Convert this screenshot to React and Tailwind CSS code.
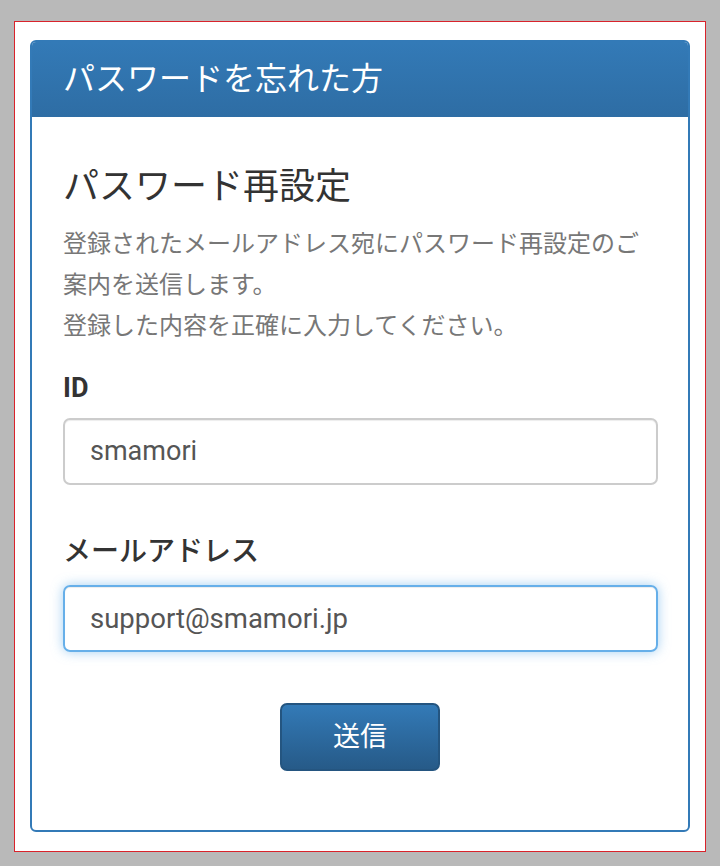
export default function App() {
  const font = { fontFamily: "Roboto, 'Noto Sans CJK JP', sans-serif" };
  return (
    <div className="w-[720px] h-[866px] bg-[#b9b9b9] pt-[21px] pl-[14px]" style={font}>
      <div className="w-[692px] h-[831px] border border-[#d9232b] bg-white pt-[18px] pl-[15px]">
        <div className="w-[660px] h-[792px] border-2 border-[#337ab7] rounded-[6px] overflow-hidden flex flex-col">
          <div className="h-[75px] bg-gradient-to-b from-[#337ab7] to-[#2e6da4] pl-[31px] flex items-center">
            <h2 className="text-white text-[32px] leading-none pb-[2px]">パスワードを忘れた方</h2>
          </div>
          <div className="px-[31px] pt-[48px]">
            <h3 className="text-[36px] leading-[44px] text-[#333]">パスワード再設定</h3>
            <p className="mt-[15px] text-[24px] leading-[41px] text-[#777]">
              登録されたメールアドレス宛にパスワード再設定のご案内を送信します。
              <br />
              登録した内容を正確に入力してください。
            </p>
            <label className="block mt-[21px] text-[27px] leading-[40px] font-bold text-[#333]">ID</label>
            <div className="mt-[10px] h-[67px] w-[595px] border-2 border-[#ccc] rounded-[7px] flex items-center pl-[25px] text-[27px] text-[#555] shadow-[inset_0_1px_1px_rgba(0,0,0,0.075)]">
              smamori
            </div>
            <label className="block mt-[47px] text-[28px] leading-[40px] font-medium text-[#333]">メールアドレス</label>
            <div className="mt-[13px] h-[67px] w-[595px] border-2 border-[#66afe9] rounded-[7px] flex items-center pl-[25px] text-[27.5px] text-[#555] shadow-[inset_0_1px_1px_rgba(0,0,0,0.075),0_0_12px_rgba(102,175,233,0.6)]">
              support@smamori.jp
            </div>
            <div className="flex justify-center mt-[51px]">
              <button className="w-[160px] h-[68px] rounded-[7px] border-2 border-[#245580] bg-gradient-to-b from-[#337ab7] to-[#265a88] text-white text-[27px]">
                送信
              </button>
            </div>
          </div>
        </div>
      </div>
    </div>
  );
}
